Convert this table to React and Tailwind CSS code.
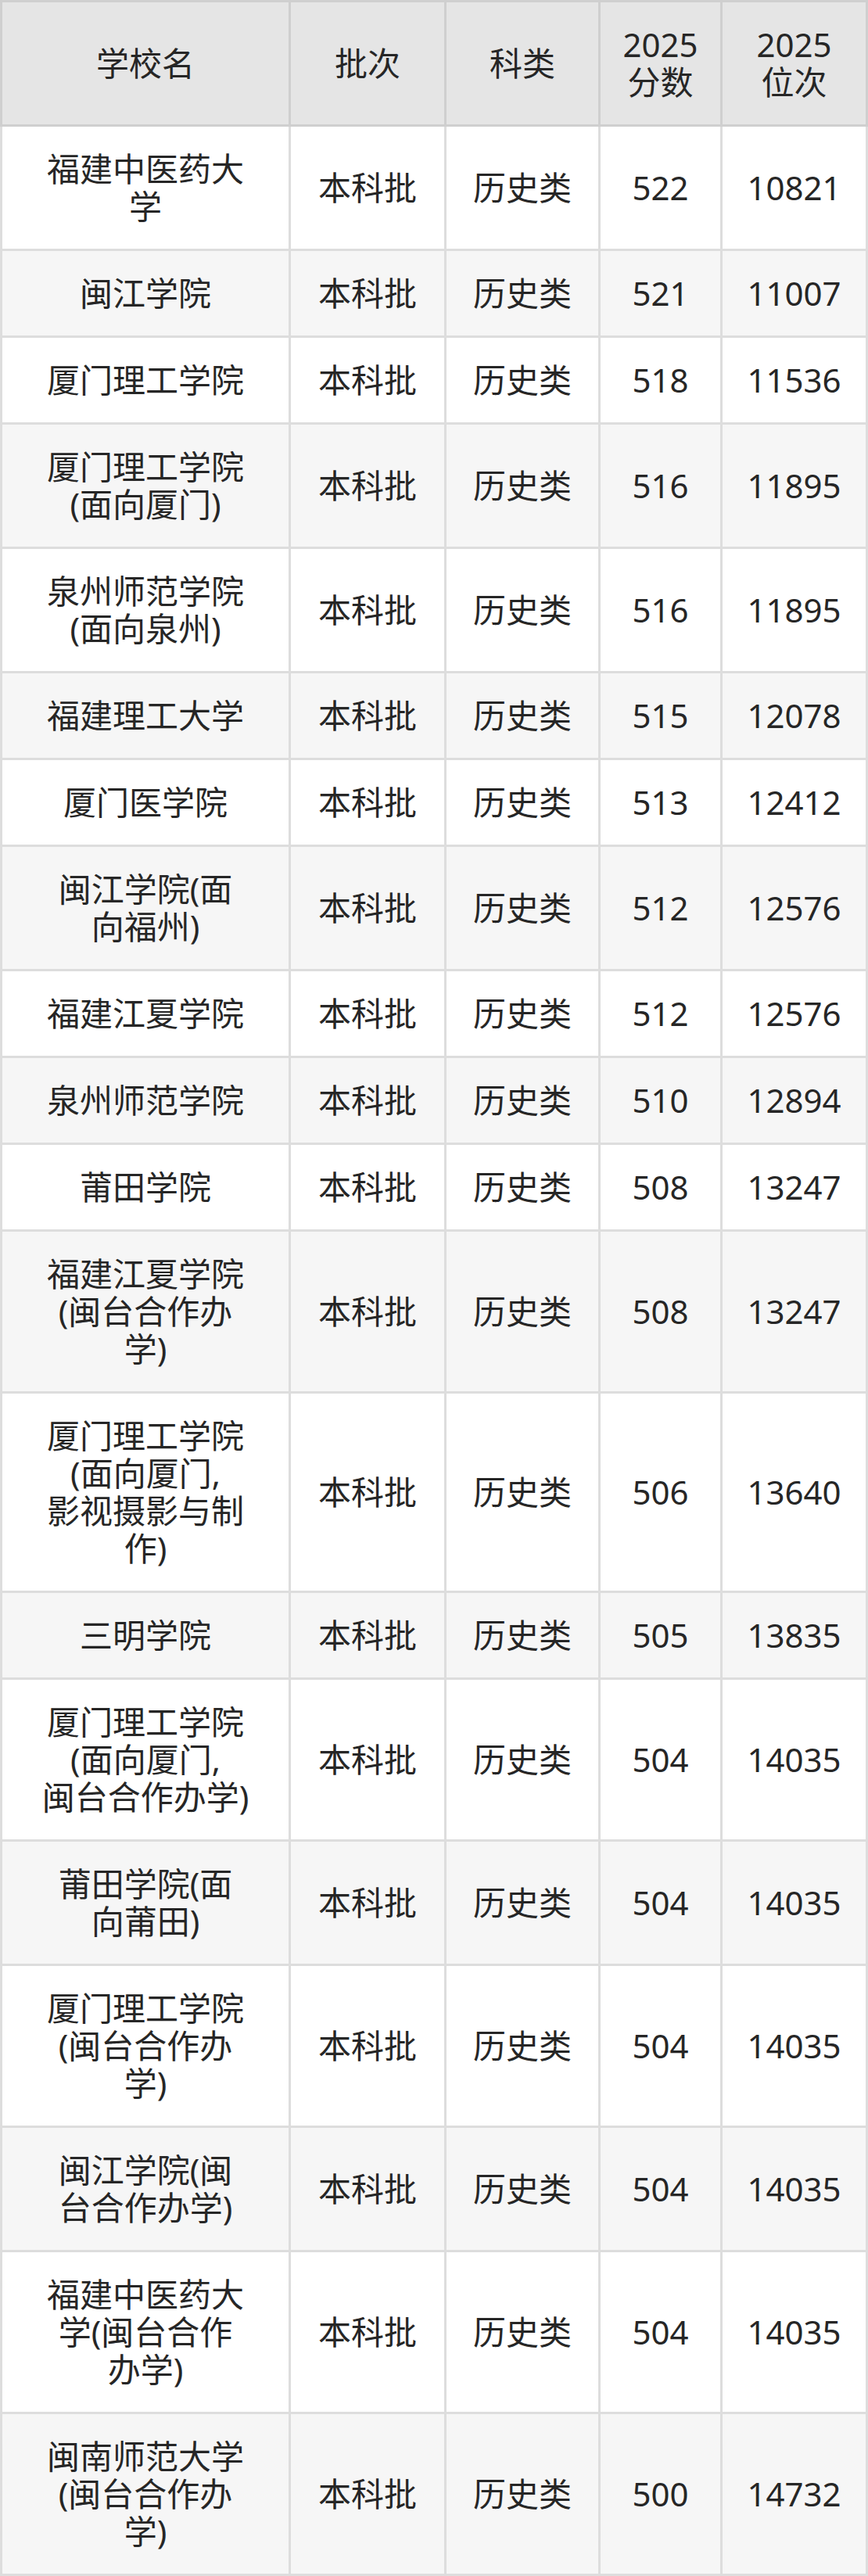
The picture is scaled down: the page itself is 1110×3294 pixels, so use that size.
import React from 'react';

const rows = [
  { name: ['福建中医药大', '学'], score: '522', rank: '10821' },
  { name: ['闽江学院'], score: '521', rank: '11007' },
  { name: ['厦门理工学院'], score: '518', rank: '11536' },
  { name: ['厦门理工学院', '(面向厦门)'], score: '516', rank: '11895' },
  { name: ['泉州师范学院', '(面向泉州)'], score: '516', rank: '11895' },
  { name: ['福建理工大学'], score: '515', rank: '12078' },
  { name: ['厦门医学院'], score: '513', rank: '12412' },
  { name: ['闽江学院(面', '向福州)'], score: '512', rank: '12576' },
  { name: ['福建江夏学院'], score: '512', rank: '12576' },
  { name: ['泉州师范学院'], score: '510', rank: '12894' },
  { name: ['莆田学院'], score: '508', rank: '13247' },
  { name: ['福建江夏学院', '(闽台合作办', '学)'], score: '508', rank: '13247' },
  { name: ['厦门理工学院', '(面向厦门,', '影视摄影与制', '作)'], score: '506', rank: '13640' },
  { name: ['三明学院'], score: '505', rank: '13835' },
  { name: ['厦门理工学院', '(面向厦门,', '闽台合作办学)'], score: '504', rank: '14035' },
  { name: ['莆田学院(面', '向莆田)'], score: '504', rank: '14035' },
  { name: ['厦门理工学院', '(闽台合作办', '学)'], score: '504', rank: '14035' },
  { name: ['闽江学院(闽', '台合作办学)'], score: '504', rank: '14035' },
  { name: ['福建中医药大', '学(闽台合作', '办学)'], score: '504', rank: '14035' },
  { name: ['闽南师范大学', '(闽台合作办', '学)'], score: '500', rank: '14732' }
];

// column widths include the right border (and the left one on the first column)
const widths = ['w-[372px] border-l-[3px]', 'w-[199px]', 'w-[197px]', 'w-[156px]', 'w-[186px]'];

function Cell({ col, lines, head }) {
  return (
    <div
      className={`${widths[col]} shrink-0 flex flex-col items-center justify-center text-center py-[30px] border-r-[3px] border-b-[3px] ${
        head ? 'border-[#cfcfcf] border-t-[3px]' : 'border-[#dddddd]'
      }`}
    >
      {lines.map((l, i) => (
        <div key={i} className="h-[48px] whitespace-nowrap">{l}</div>
      ))}
    </div>
  );
}

export default function App() {
  return (
    <div
      className="w-[1110px] text-[42px] leading-[48px] text-[#262626]"
      style={{ fontFamily: '"Noto Sans", "Noto Sans CJK SC", sans-serif' }}
    >
      {/* Header */}
      <div className="flex bg-[#e5e5e5]">
        <Cell head col={0} lines={['学校名']} />
        <Cell head col={1} lines={['批次']} />
        <Cell head col={2} lines={['科类']} />
        <Cell head col={3} lines={['2025', '分数']} />
        <Cell head col={4} lines={['2025', '位次']} />
      </div>

      {/* Body */}
      {rows.map((r, i) => (
        <div key={i} className={`flex ${i % 2 === 1 ? 'bg-[#f6f6f6]' : 'bg-white'}`}>
          <Cell col={0} lines={r.name} />
          <Cell col={1} lines={['本科批']} />
          <Cell col={2} lines={['历史类']} />
          <Cell col={3} lines={[r.score]} />
          <Cell col={4} lines={[r.rank]} />
        </div>
      ))}
    </div>
  );
}
